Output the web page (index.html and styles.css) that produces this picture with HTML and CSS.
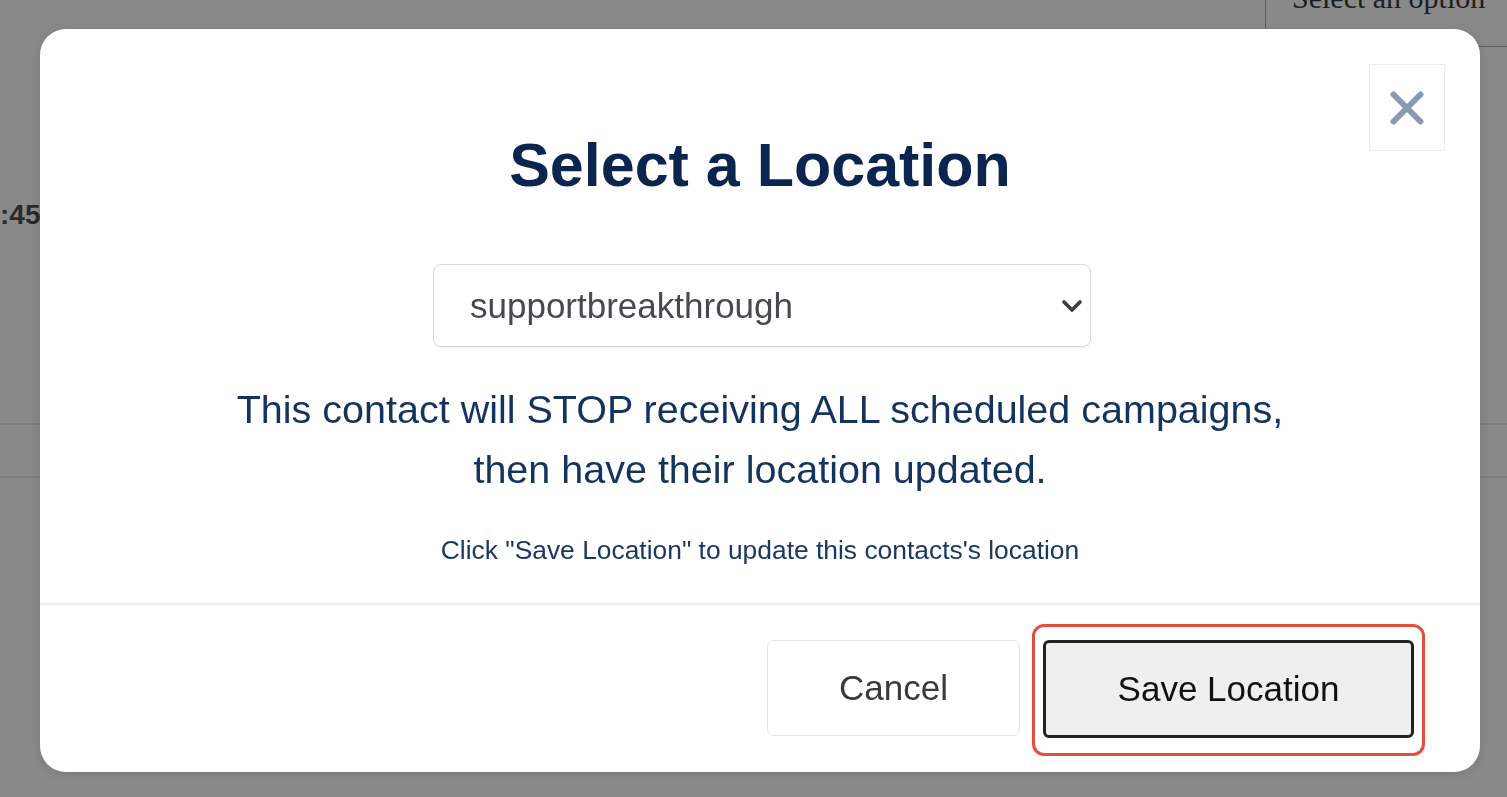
FILE: index.html
```html
<!DOCTYPE html>
<html lang="en">
<head>
<meta charset="utf-8">
<title>Select a Location</title>
<link rel="stylesheet" href="styles.css">
</head>
<body>
<div class="page">
  <div class="topbar">
    <div class="opt-box"><span class="opt-text">Select an option</span></div>
  </div>
  <div class="time">:45</div>
  <div class="rule rule-one"></div>
  <div class="rule rule-two"></div>
</div>

<div class="overlay">
  <div class="modal">
    <button class="close" type="button" aria-label="Close">
      <svg width="34" height="34" viewBox="0 0 34 34"><path d="M3.5 3.5 L30.5 30.5 M30.5 3.5 L3.5 30.5" stroke="#8a9bb0" stroke-width="6" stroke-linecap="round" fill="none"/></svg>
    </button>
    <div class="modal-body">
      <h1 class="title">Select a Location</h1>
      <div class="select-wrap">
        <div class="select">supportbreakthrough</div>
        <svg class="chev" width="22" height="14" viewBox="0 0 22 14"><path d="M3 3 L11 11 L19 3" stroke="#3a3d42" stroke-width="3.6" stroke-linecap="round" stroke-linejoin="round" fill="none"/></svg>
      </div>
      <p class="warn">This contact will STOP receiving ALL scheduled campaigns,<br>then have their location updated.</p>
      <p class="hint">Click "Save Location" to update this contacts's location</p>
    </div>
    <div class="modal-footer">
      <button class="btn btn-cancel" type="button">Cancel</button>
      <div class="highlight">
        <button class="btn btn-save" type="button">Save Location</button>
      </div>
    </div>
  </div>
</div>
</body>
</html>
```

FILE: styles.css
```css
html, body {
  margin: 0;
  padding: 0;
}
body {
  width: 1507px;
  height: 797px;
  overflow: hidden;
  background: #888888;
  font-family: "Liberation Sans", Arial, Helvetica, sans-serif;
}
.page {
  height: 797px;
  background: #898989;
  overflow: hidden;
}
.topbar {
  display: flex;
  justify-content: flex-end;
  height: 47px;
}
.opt-box {
  width: 215px;
  height: 46px;
  border-left: 1px solid #5c5c5c;
  border-bottom: 1px solid #5c5c5c;
  padding-left: 26px;
  box-sizing: content-box;
  overflow: hidden;
}
.opt-text {
  display: block;
  margin-top: -17px;
  font-family: "Liberation Serif", "Times New Roman", serif;
  font-size: 30px;
  line-height: 30px;
  color: #1e1e1e;
  white-space: nowrap;
}
.time {
  margin-top: 153px;
  height: 30px;
  font-size: 28px;
  line-height: 30px;
  font-weight: bold;
  color: #2a2a2a;
}
.rule {
  height: 2px;
  background: #7c7c7c;
}
.rule-one { margin-top: 193px; }
.rule-two { margin-top: 51px; }

.overlay {
  position: fixed;
  inset: 0;
  padding: 29px 27px 25px 40px;
  display: flex;
}
.modal {
  flex: 1;
  position: relative;
  background: #ffffff;
  border-radius: 26px;
  box-shadow: 0 2px 10px rgba(0, 0, 0, 0.12);
  display: flex;
  flex-direction: column;
}
.close {
  position: absolute;
  top: 35px;
  right: 35px;
  width: 76px;
  height: 87px;
  background: #ffffff;
  border: 1px solid #e9edf3;
  border-radius: 2px;
  padding: 0;
  display: flex;
  align-items: center;
  justify-content: center;
  cursor: pointer;
}
.modal-body {
  padding-top: 100px;
  padding-bottom: 33px;
  display: flex;
  flex-direction: column;
  align-items: center;
  border-bottom: 2px solid #eceef5;
}
.title {
  margin: 0;
  font-size: 61px;
  line-height: 73px;
  font-weight: bold;
  color: #0b2550;
}
.select-wrap {
  position: relative;
  margin-top: 62px;
  margin-left: 4px;
}
.select {
  width: 620px;
  height: 81px;
  border: 1px solid #d6d9de;
  border-radius: 8px;
  box-shadow: 0 1px 2px rgba(0, 0, 0, 0.05);
  padding-left: 36px;
  box-sizing: content-box;
  font-size: 35px;
  line-height: 81px;
  color: #46494e;
}
.chev {
  position: absolute;
  right: 8px;
  top: 35px;
}
.warn {
  margin: 32px 0 0;
  font-size: 39.5px;
  line-height: 60px;
  text-align: center;
  color: #14335f;
}
.hint {
  margin: 32px 0 0;
  font-size: 26.4px;
  line-height: 39px;
  text-align: center;
  color: #1b3862;
}
.modal-footer {
  flex: 1;
  display: flex;
  align-items: flex-start;
  justify-content: flex-end;
  gap: 12px;
  padding-top: 19px;
  padding-right: 55px;
}
.btn {
  font-family: "Liberation Sans", Arial, Helvetica, sans-serif;
  font-size: 35px;
  border-radius: 7px;
  cursor: pointer;
}
.btn-cancel {
  margin-top: 16px;
  width: 253px;
  height: 96px;
  background: #ffffff;
  border: 1px solid #e2e4e8;
  color: #3a3a3a;
}
.highlight {
  border: 3px solid #e0503c;
  border-radius: 12px;
  padding: 13px 8px 15px 8px;
  display: flex;
}
.btn-save {
  width: 371px;
  height: 98px;
  background: #efefef;
  border: 3px solid #222222;
  color: #111111;
  border-radius: 6px;
}
```
